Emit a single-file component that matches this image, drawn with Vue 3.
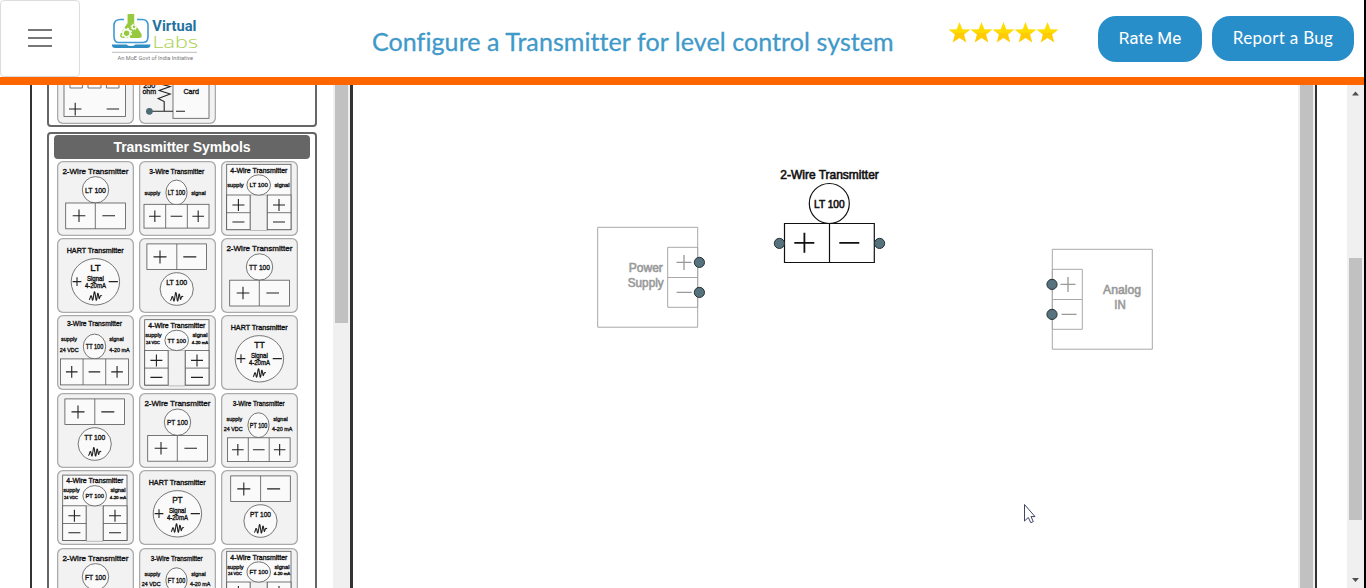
<script setup>
import { h } from 'vue'

const WAVE = 'M-6.500 3.500Q-5.500 3.500 -4.800 0Q-4 -1.500 -3.500 1.500Q-3 5.500 -2.300 3L-1.300 -3.500Q-.7 -6 -.2 -2L.6 3.500Q1.200 5 1.600 1.500L2.200 -2.500Q2.800 -4 3.200 -.5Q3.800 4 4.300 1.500Q5 -1.500 6.500 -.3'

// Symbol text stretched to a fixed advance, centred on x
const txt = (s, x, y, w, size) =>
  h('text', { x: x - w / 2, y, 'font-size': size, textLength: w, lengthAdjust: 'spacingAndGlyphs' }, s)
const box = (x, y, width, height) => h('rect', { x, y, width, height, class: 'shape' })
const oval = (cx, cy, rx, ry) => h('ellipse', { cx, cy, rx, ry, class: 'shape' })
const line = (d, c = 'shape') => h('path', { d, class: c })
const plus = (x, y, r) => line(`M${x - r} ${y}h${2 * r}M${x} ${y - r}v${2 * r}`, 'sign')
const minus = (x, y, r) => line(`M${x - r} ${y}h${2 * r}`, 'sign')
const wave = (x, y) => h('path', { d: WAVE, transform: `translate(${x} ${y})`, class: 'sign' })

const drawings = {
  two: ({ t, dy = 0 }) => h('g', { transform: `translate(0 ${dy})` }, [
    txt('2-Wire Transmitter', 38.4, 12.8, 66, 8),
    oval(38.5, 28.8, 13.2, 13.2),
    txt(t + ' 100', 38.5, 31.6, 21, 7.6),
    box(8.7, 42, 59.7, 25.8), line('M38.3 42v25.8'),
    plus(22, 54.8, 6.3), minus(51.7, 54.8, 6.3)
  ]),
  three: ({ t, m }) => {
    const big = m === 2
    const x = big ? 3.4 : m === 1 ? 6.4 : 5
    const w = big ? 68 : m === 1 ? 62.7 : 65
    const y = big ? 43.9 : m === 1 ? 44.8 : 43.3
    const hh = big ? 26 : 23.8
    const cy = m === 1 ? 32.2 : 31.5
    return h('g', [
      txt('3-Wire Transmitter', big ? 37.4 : 37.7, big ? 11.4 : 13.1, m === 1 ? 52 : 55, 7.2),
      oval(37.5, cy, big ? 11.2 : 10.6, 12.4),
      txt(t + ' 100', 37.5, cy + 2.4, 17.5, 6.6),
      txt('supply', big ? 12 : 13.4, m ? (big ? 26 : 28) : 34, 15.8, 6.2),
      txt('signal', 59.5, m ? (big ? 26 : 28) : 34, 14.4, 6.2),
      m ? txt('24 VDC', 12.2, big ? 37 : 38, 18.8, 6.2) : null,
      m ? txt('4-20 mA', big ? 62.5 : 61.2, big ? 37 : 38, 20.4, 6.2) : null,
      box(x, y, w, hh),
      line(`M${x + w / 3} ${y}v${hh}M${x + w * 2 / 3} ${y}v${hh}`),
      plus(x + w / 6, y + hh / 2, 5.8), minus(x + w / 2, y + hh / 2, 5.8), plus(x + w * 5 / 6, y + hh / 2, 5.8)
    ])
  },
  four: ({ t, m, dy = 0 }) => h('g', { transform: `translate(0 ${dy})` }, [
    box(5.7, 3.3, 64.3, 65.4),
    line('M29.3 34V69.5H46V34Z', 'gap'),
    txt('4-Wire Transmitter', 37.8, 11.6, 57, 7),
    oval(37.7, 24, 11.8, 10.2),
    txt(t + ' 100', 37.7, 26.2, 18.4, 6),
    txt('supply', 14.4, m ? 20.6 : 26, 16.2, 5.8),
    txt('signal', 61, m ? 20.6 : 26, 15, 5.8),
    m ? txt('24 VDC', 14, 27.3, 14, 4.2) : null,
    m ? txt('4-20 mA', 61, 27.3, 16.4, 4.2) : null,
    box(5.7, 34, 23.4, 34.7), box(46.3, 34, 23.7, 34.7),
    line('M5.7 51.7h23.4M46.3 51.7h23.7'),
    plus(17.4, 44, 6), plus(58, 44, 6), minus(17.4, 61, 6), minus(58, 61, 6)
  ]),
  hart: ({ t }) => h('g', [
    txt('HART Transmitter', 38.2, 14.5, 57, 7),
    oval(38.4, 43.8, 24.2, 23.2),
    txt(t, 38.4, 32.6, 10.5, 9),
    txt('Signal', 38.4, 43, 17, 6.6),
    txt('4-20mA', 38.4, 50, 21, 6.8),
    plus(20, 43.6, 4.4), minus(56.3, 43.6, 4.6), wave(38.4, 58.2)
  ]),
  loop: ({ t, dx = 0 }) => h('g', { transform: `translate(${dx} 0)` }, [
    box(7.9, 5.9, 59.6, 25.6), line('M37.8 5.9v25.6'),
    plus(21, 18.9, 6.5), minus(50.8, 18.9, 6.5),
    oval(37.7, 51, 16.6, 16.3),
    txt(t + ' 100', 37.7, 47, 21, 7), wave(37.7, 59)
  ])
}

const Drawing = (p) => drawings[p.item.k](p.item)
Drawing.props = ['item']

const symbols = [
  { k: 'two', t: 'LT' }, { k: 'three', t: 'LT', m: 0 }, { k: 'four', t: 'LT' },
  { k: 'hart', t: 'LT' }, { k: 'loop', t: 'LT' }, { k: 'two', t: 'TT', dy: 0.2 },
  { k: 'three', t: 'TT', m: 2 }, { k: 'four', t: 'TT', m: 1, dy: 1.4 }, { k: 'hart', t: 'TT' },
  { k: 'loop', t: 'TT' }, { k: 'two', t: 'PT', dy: 0.4 }, { k: 'three', t: 'PT', m: 1 },
  { k: 'four', t: 'PT', m: 1, dy: 1.8 }, { k: 'hart', t: 'PT' }, { k: 'loop', t: 'PT', dx: 1.8 },
  { k: 'two', t: 'FT', dy: 0 }, { k: 'three', t: 'FT', m: 1 }, { k: 'four', t: 'FT', m: 1, dy: 0 }
]
</script>

<template>
  <div class="page">
    <div class="main">
      <header class="header">
        <button class="menu" aria-label="Menu"><i></i><i></i><i></i></button>
        <svg class="logo" width="90" height="52" viewBox="110 12 90 52">
          <path d="M124 19.500h-3.500q-6.500 0-6.500 6v10.500q0 6.500 4 6.500h25q5 0 5-6V25.500q0-6-6-6H137" fill="none" stroke="#3d9bd0" stroke-width="1.600" />
          <path d="M112 44.500h14.500q1.500 1.500 4.500 1.500t4.500-1.500H150.500q0 3.600-3.500 3.600H115.500q-3.800 0-3.500-3.600Z" fill="#2f8dc4" />
          <path d="M127.600 14h6.600v9l7 10.500q2 4.300-2.500 4.500h-15.500q-4.500-.3-2.500-4.500l6.900-10.500Z" fill="#96c93d" />
          <circle cx="126.600" cy="33.200" r="3.600" fill="#96c93d" stroke="#fff" stroke-width="1.700" />
          <circle cx="126.600" cy="33.200" r="4.900" fill="none" stroke="#fff" stroke-width="1.300" stroke-dasharray="1.900 1.950" />
          <circle cx="134" cy="26.800" r="2" fill="none" stroke="#fff" stroke-width="1.300" />
          <circle cx="134" cy="26.800" r="3" fill="none" stroke="#fff" stroke-width="1" stroke-dasharray="1.200 1.150" />
          <text x="152.300" y="31" font-size="15.500" textLength="44.200" lengthAdjust="spacingAndGlyphs" fill="#25729f" class="virtual">Virtual</text>
          <text x="152.500" y="48" font-size="17" textLength="45.500" lengthAdjust="spacingAndGlyphs" fill="#a9d04f" class="labs">Labs</text>
          <path d="M112 52.300h85" stroke="#aaa" stroke-width=".8" />
          <text x="117.500" y="59.700" font-size="6" textLength="75.500" lengthAdjust="spacingAndGlyphs" fill="#777" class="tag">An MoE Govt of India Initiative</text>
        </svg>
        <h1>Configure a Transmitter for level control system</h1>
        <svg class="stars" width="112" height="24" viewBox="0 0 112 24">
          <defs>
            <linearGradient id="gold" x1="0" y1="0" x2="0" y2="1">
              <stop offset=".5" stop-color="#ffdc00" /><stop offset=".56" stop-color="#ffcb05" />
            </linearGradient>
          </defs>
          <path v-for="n in 5" :key="n" :transform="`translate(${(n - 1) * 22} 0)`" fill="url(#gold)"
            d="M11.500 1L14.300 8.300L22.500 8.600L16.100 13.600L18.300 21.500L11.500 17L4.700 21.500L6.900 13.600L.5 8.600L8.700 8.300Z" />
        </svg>
        <button class="btn rate">Rate Me</button>
        <button class="btn bug">Report a Bug</button>
      </header>

      <div class="work">
        <aside class="sidebar">
          <section class="group first">
            <div class="cell">
              <svg width="76" height="75" viewBox="57.300 49 76 75">
                <rect class="shape" x="64.300" y="60" width="61.400" height="56.500" />
                <path class="shape" d="M70.300 76h12.400v12h-12.400ZM88.300 76h13v12h-13ZM106.700 76h12.600v12h-12.600Z" />
                <path class="sign strong" d="M69.300 109h12.400M75.500 102.800v12.600M107 109h12.400" />
              </svg>
            </div>
            <div class="cell">
              <svg width="76" height="75" viewBox="139.300 49 76 75">
                <rect class="shape" x="173.300" y="60" width="36" height="58.300" />
                <text x="183.700" y="94.300" font-size="8" textLength="15.600" lengthAdjust="spacingAndGlyphs">Card</text>
                <text x="143.500" y="88.200" font-size="8" textLength="12" lengthAdjust="spacingAndGlyphs">250</text>
                <text x="142.700" y="94" font-size="8" textLength="13.800" lengthAdjust="spacingAndGlyphs">ohm</text>
                <path class="sign strong" d="M164.500 80l-6 3.500 12 3-11 4 11 3.500-12 4.500 6 3v9.800M150 111.300h23.300M176.300 111.300h9" />
                <circle cx="149.700" cy="111.300" r="3.400" fill="#4f6b76" />
              </svg>
            </div>
          </section>
          <section class="group second">
            <h2>Transmitter Symbols</h2>
            <div class="grid">
              <div v-for="(s, i) in symbols" :key="i" class="cell">
                <svg width="76" height="75" viewBox="0 0 76 75"><Drawing :item="s" /></svg>
              </div>
            </div>
          </section>
        </aside>
        <div class="side-scroll"><div></div></div>

        <svg class="canvas" width="945" height="503" viewBox="353 85 945 503">
          <g class="faded">
            <path d="M597.700 227.300h100v99.900h-100ZM667.700 247.300h30v60h-30ZM667.700 277.500h30" />
            <path class="mark" d="M676.500 262.400h15M684 254.900v15M676.700 292.400h15" />
            <text x="628.700" y="271.800" textLength="34.200" lengthAdjust="spacingAndGlyphs">Power</text>
            <text x="627.700" y="286.800" textLength="36" lengthAdjust="spacingAndGlyphs">Supply</text>
            <path d="M1052.300 249.300h100v99.900h-100ZM1052.300 269.300h30v60h-30ZM1052.300 299.500h30" />
            <path class="mark" d="M1060.500 284.400h15M1068 276.900v15M1061.500 314.400h15" />
            <text x="1103" y="293.800" textLength="38" lengthAdjust="spacingAndGlyphs">Analog</text>
            <text x="1114.300" y="308.500" textLength="11.500" lengthAdjust="spacingAndGlyphs">IN</text>
          </g>
          <g class="solid">
            <text x="780.300" y="178.600" textLength="98.500" lengthAdjust="spacingAndGlyphs">2-Wire Transmitter</text>
            <circle cx="829.300" cy="203.500" r="20" />
            <text x="814" y="207.800" textLength="30.600" lengthAdjust="spacingAndGlyphs" class="tagname">LT 100</text>
            <path d="M784.500 223.500h89.800v39h-89.800ZM829.500 223.500v39" />
            <path class="mark" d="M794.300 242.800h20M804.400 232.800v20M839.300 242.800h20" />
          </g>
          <g class="pins">
            <circle cx="699.400" cy="262.400" r="5.100" /><circle cx="699.400" cy="292.400" r="5.100" />
            <circle cx="779.400" cy="243.400" r="5.100" /><circle cx="879.600" cy="243.400" r="5.100" />
            <circle cx="1052" cy="284.400" r="5.100" /><circle cx="1052" cy="314.400" r="5.100" />
          </g>
          <path d="M1024.500 504.500v16.500l3.800-3.500 2.500 5.200 2.500-1.100-2.300-5h4Z" fill="#fff" stroke="#2b3150" stroke-width=".9" />
        </svg>
        <div class="canvas-scroll"></div>
        <div class="margin"></div>
        <div class="page-scroll">
          <svg width="17" height="17"><path d="M5 10.500l3.500-4 3.500 4Z" fill="#505050" /></svg>
          <div class="thumb"></div>
          <svg class="down" width="17" height="17"><path d="M5 7l3.500 4 3.500-4Z" fill="#505050" /></svg>
        </div>
      </div>
    </div>
    <div class="edge"></div>
  </div>
</template>

<style scoped>
.page { display: flex; width: 1366px; height: 588px; overflow: hidden; background: #fff; font-family: "Liberation Sans", Arial, sans-serif; }
.main { width: 1364px; }
.edge { width: 2px; background: #000; }
.header { display: flex; box-sizing: border-box; height: 85px; border-bottom: 8px solid #f60; align-items: flex-start; }
.menu { box-sizing: border-box; width: 80px; height: 77px; padding: 0 0 2px; border: 1px solid #ddd; border-radius: 4px; background: #fff; display: flex; flex-direction: column; align-items: center; justify-content: center; gap: 6px; }
.menu i { width: 24px; height: 2px; background: #777; }
.logo { margin: 12px 0 0 30px; }
.virtual { font-family: Roboto, sans-serif; font-weight: 700; }
.labs { font-family: "Open Sans", sans-serif; font-weight: 300; }
.tag { font-family: Roboto, sans-serif; }
h1 { margin: 25px 0 0 172px; width: 576px; font: 400 25px/32px Lato, sans-serif; letter-spacing: .08px; color: #3f99c9; white-space: nowrap; -webkit-text-stroke: .3px #3f99c9; }
.stars { margin-top: 21px; flex: none; width: 112px; }
.btn { flex: none; height: 46px; border: 0; border-radius: 18px; padding: 0 0 2px; background: #288ec9; color: #fff; margin-top: 16px; }
.rate { width: 104px; margin-left: 38px; font: 17px Roboto, sans-serif; }
.bug { width: 142px; height: 45px; margin-left: 10px; font: 17px Lato, sans-serif; letter-spacing: .3px; }
.work { display: flex; height: 503px; overflow: hidden; }
.sidebar { box-sizing: border-box; width: 303px; height: 503px; margin-left: 30px; border-left: 2px solid #333; padding-left: 15px; overflow: hidden; flex: none; }
.group { box-sizing: border-box; width: 270px; border: 2px solid #666; border-radius: 4px; }
.first { display: flex; align-items: flex-end; gap: 5.700px; height: 80px; margin-top: -38px; padding: 0 0 .7px 8.300px; }
.second { height: 640px; margin-top: 5px; padding: 1px 5px 0; }
h2 { margin: 0; height: 23.500px; border-radius: 4px; background: #666; color: #fff; font: bold 14px/24px "Liberation Sans", Arial, sans-serif; letter-spacing: -.08px; text-align: center; }
.grid { display: grid; grid-template-columns: repeat(3, 76.300px); gap: 2.400px 5.700px; margin: 2.200px 0 0 3.300px; }
.cell { box-sizing: border-box; width: 76.300px; height: 75px; border-radius: 6px; background: #f2f2f2; box-shadow: inset 0 0 0 1.300px #aaa; overflow: hidden; flex: none; }
.cell svg { display: block; }
.cell :deep(text) { font-family: "Liberation Sans", Arial, sans-serif; fill: #111; stroke: #111; stroke-width: .35px; }
.cell :deep(.shape) { fill: #fafafa; stroke: #555; stroke-width: .8px; }
.cell :deep(.gap) { fill: #f2f2f2; stroke: #bbb; }
.cell :deep(.sign) { fill: none; stroke: #222; stroke-width: 1.100px; }
.strong { stroke-width: 1.300px; }
.side-scroll { box-sizing: border-box; width: 20px; border-right: 3px solid #333; background: #f0f0f0; padding: 0 2px; flex: none; }
.side-scroll div { height: 238px; background: #c1c1c1; }
.canvas { flex: none; display: block; }
.canvas text { font: 12.500px "Liberation Sans", Arial, sans-serif; }
.faded { fill: none; stroke: #a8a8a8; stroke-width: 1px; }
.faded .mark { stroke: #999; stroke-width: 1.300px; }
.faded text { fill: #999; stroke: #999; stroke-width: .6px; }
.solid { fill: none; stroke: #111; stroke-width: 1.200px; }
.solid .mark { stroke-width: 1.800px; }
.solid text { fill: #111; stroke: #111; stroke-width: .6px; font-size: 12px; }
.solid .tagname { font-size: 11px; }
.pins { fill: #55727d; stroke: #263238; stroke-width: 1px; }
.canvas-scroll { box-sizing: border-box; width: 19px; flex: none; background: #c1c1c1; border-left: 2px solid #f0f0f0; border-right: 2px solid #333; box-shadow: inset -2px 0 #f0f0f0; }
.margin { width: 30px; flex: none; }
.page-scroll { width: 17px; flex: none; background: #f0f0f0; display: flex; flex-direction: column; align-items: center; }
.page-scroll svg { flex: none; }
.page-scroll .thumb { width: 13px; height: 262px; background: #c1c1c1; margin-top: 156px; flex: none; }
.page-scroll .down { margin-top: auto; }
</style>
